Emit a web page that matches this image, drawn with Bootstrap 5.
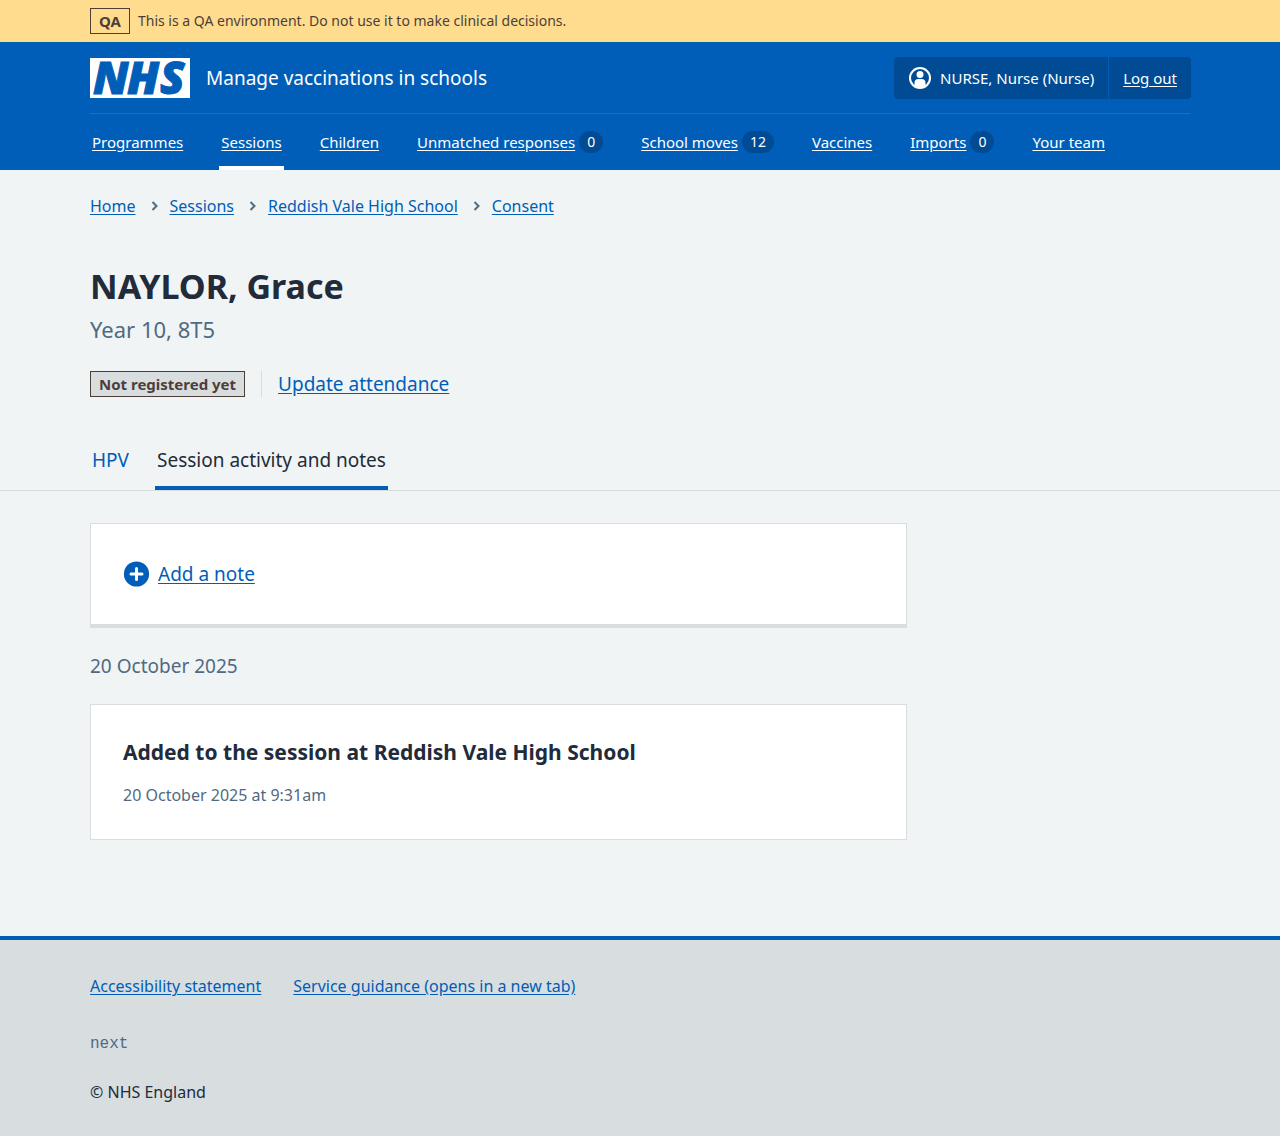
<!DOCTYPE html>
<html lang="en">
<head>
<meta charset="utf-8">
<meta name="viewport" content="width=device-width, initial-scale=1">
<title>NAYLOR, Grace – Manage vaccinations in schools</title>
<link href="https://cdn.jsdelivr.net/npm/bootstrap@5.3.0/dist/css/bootstrap.min.css" rel="stylesheet">
<style>
  :root { --blue: #005eb8; --blue-dark: #004b93; --ink: #212b3a; --muted: #4f6a82; --line: #d8dde0; --page: #f0f4f5; }
  body { font-family: "Noto Sans", "Open Sans", sans-serif; font-size: 16px; line-height: 24px; color: var(--ink); background: var(--page); }
  a { color: var(--blue); text-underline-offset: 2px; }
  .wrap { width: 100%; max-width: 1132px; margin: 0 auto; padding: 0 16px; }
  .env-banner { background: #ffdc8e; color: #4d3f38; font-size: 14px; }
  .status-tag { border: 1px solid #4d3f38; color: #4d3f38; font-size: 15px; font-weight: 700; line-height: 24px; padding: 0 8px; }
  .status-grey { background: var(--line); }
  .site-header { background: var(--blue); color: #fff; }
  .site-header a { color: #fff; }
  .header-top { padding: 15px 0 14px; border-bottom: 1px solid #1a6ebf; }
  .nhs-logo { overflow: visible; }
  .service { font-size: 19px; line-height: 28px; }
  .account { background: var(--blue-dark); border-radius: 4px; font-size: 15px; line-height: 42px; margin-right: -1px; }
  .account-user, .account-out { padding: 0 14px; }
  .account-out { border-left: 1px solid var(--blue); }
  .main-nav { font-size: 15px; column-gap: 34px; }
  .main-nav li { padding: 16px 2px; }
  .main-nav .current { box-shadow: inset 0 -4px #fff; }
  .count { background: var(--blue-dark); border-radius: 11px; font-size: 14px; line-height: 22px; padding: 0 8px; }
  .crumbs { column-gap: 11px; padding-top: 24px; }
  .person-name { font-size: 34px; font-weight: 700; line-height: 44px; margin: 46px 0 5px; }
  .person-group { font-size: 22px; line-height: 32px; color: var(--muted); margin: 0 0 26px; }
  .text-19 { font-size: 19px; line-height: 28px; }
  .attendance a { border-left: 1px solid var(--line); padding-left: 16px; line-height: 26px; }
  .tabs { border-bottom: 1px solid var(--line); margin-top: 33px; }
  .tabs ul { column-gap: 24px; }
  .tabs a { display: block; padding: 16px 2px; text-decoration: none; }
  .tabs .current { color: var(--ink); box-shadow: inset 0 -4px var(--blue); }
  .page-row { --bs-gutter-x: 32px; padding: 32px 0 96px; }
  .panel { background: #fff; border: 1px solid var(--line); padding: 32px; }
  .panel-action { display: flex; border-bottom-width: 4px; }
  .day { color: var(--muted); margin: 24px 0; }
  .event-title { font-size: 21px; font-weight: 700; line-height: 30px; margin: 0 0 16px; }
  .event-date { color: var(--muted); font-size: 16px; }
  .site-footer { background: var(--line); border-top: 4px solid var(--blue); padding: 34px 0 32px; }
  .footer-links { column-gap: 32px; }
  .release { font-family: "Liberation Mono", monospace; color: var(--muted); margin: 34px 0 24px; }
</style>
<script src="https://cdn.jsdelivr.net/npm/bootstrap@5.3.0/dist/js/bootstrap.bundle.min.js"></script>
</head>
<body>
<div class="env-banner">
  <div class="wrap d-flex align-items-center gap-2 py-2">
    <strong class="status-tag">QA</strong>
    <span>This is a QA environment. Do not use it to make clinical decisions.</span>
  </div>
</div>

<header class="site-header">
  <div class="wrap">
    <div class="header-top d-flex flex-wrap align-items-center justify-content-between gap-2">
      <div class="d-flex align-items-center gap-3">
        <a href="#" aria-label="NHS" class="d-flex">
          <svg class="nhs-logo" width="100" height="40" viewBox="0 0 100 40" aria-hidden="true">
            <rect width="100" height="40" fill="#fff"/>
            <g font-family="Open Sans" font-weight="800" font-style="italic" font-size="45" fill="#005eb8" stroke="#005eb8" stroke-width="1">
              <text x="3" y="36">N</text><text x="37" y="36">H</text><text x="70" y="36">S</text>
            </g>
          </svg>
        </a>
        <span class="service">Manage vaccinations in schools</span>
      </div>
      <div class="account d-flex">
        <span class="account-user d-flex align-items-center gap-2">
          <svg width="24" height="24" viewBox="0 0 24 24" aria-hidden="true">
            <circle cx="12" cy="12" r="10" fill="none" stroke="#fff" stroke-width="2"/>
            <circle cx="12" cy="8.500" r="3.500" fill="#fff"/>
            <path d="M6.500 19.500v-2.500a4 4 0 0 1 4-4h3a4 4 0 0 1 4 4v2.500A10 10 0 0 1 12 22a10 10 0 0 1-5.500-2.500z" fill="#fff"/>
          </svg>
          NURSE, Nurse (Nurse)
        </span>
        <span class="account-out"><a href="#">Log out</a></span>
      </div>
    </div>
    <nav aria-label="Primary">
      <ul class="main-nav list-unstyled d-flex flex-wrap mb-0">
        <li><a href="#">Programmes</a></li>
        <li class="current"><a href="#" aria-current="true">Sessions</a></li>
        <li><a href="#">Children</a></li>
        <li class="d-flex align-items-center gap-1"><a href="#">Unmatched responses</a><span class="count">0</span></li>
        <li class="d-flex align-items-center gap-1"><a href="#">School moves</a><span class="count">12</span></li>
        <li><a href="#">Vaccines</a></li>
        <li class="d-flex align-items-center gap-1"><a href="#">Imports</a><span class="count">0</span></li>
        <li><a href="#">Your team</a></li>
      </ul>
    </nav>
  </div>
</header>

<div class="wrap">
  <nav aria-label="Breadcrumb">
    <ol class="crumbs list-unstyled d-flex flex-wrap mb-0">
      <li><a href="#">Home</a></li>
      <li class="d-flex align-items-center"><svg width="12" height="12" viewBox="0 0 12 12" aria-hidden="true"><path d="M5.500 2l4 4-4 4" fill="none" stroke="#4f6a82" stroke-width="2"/></svg></li>
      <li><a href="#">Sessions</a></li>
      <li class="d-flex align-items-center"><svg width="12" height="12" viewBox="0 0 12 12" aria-hidden="true"><path d="M5.500 2l4 4-4 4" fill="none" stroke="#4f6a82" stroke-width="2"/></svg></li>
      <li><a href="#">Reddish Vale High School</a></li>
      <li class="d-flex align-items-center"><svg width="12" height="12" viewBox="0 0 12 12" aria-hidden="true"><path d="M5.500 2l4 4-4 4" fill="none" stroke="#4f6a82" stroke-width="2"/></svg></li>
      <li><a href="#">Consent</a></li>
    </ol>
  </nav>
  <h1 class="person-name">NAYLOR, Grace</h1>
  <p class="person-group">Year 10, 8T5</p>
  <div class="attendance d-flex flex-wrap align-items-center gap-3">
    <strong class="status-tag status-grey">Not registered yet</strong>
    <a href="#" class="text-19">Update attendance</a>
  </div>
</div>

<nav class="tabs" aria-label="Record">
  <ul class="wrap list-unstyled d-flex flex-wrap mb-0 text-19">
    <li><a href="#">HPV</a></li>
    <li><a href="#" class="current" aria-current="page">Session activity and notes</a></li>
  </ul>
</nav>

<main class="wrap">
  <div class="row page-row">
    <div class="col-lg-9">
      <div class="panel panel-action">
        <a href="#" class="d-flex align-items-center gap-2 text-19">
          <svg width="27" height="36" viewBox="0 0 27 36" aria-hidden="true">
            <circle cx="13.500" cy="18" r="12.600" fill="#005eb8"/>
            <path d="M13.500 12.500v11M8 18h11" stroke="#fff" stroke-width="3" stroke-linecap="round"/>
          </svg>
          <span>Add a note</span>
        </a>
      </div>
      <h2 class="day text-19 fw-normal">20 October 2025</h2>
      <div class="panel">
        <h3 class="event-title">Added to the session at Reddish Vale High School</h3>
        <p class="event-date mb-0">20 October 2025 at 9:31am</p>
      </div>
    </div>
  </div>
</main>

<footer class="site-footer">
  <div class="wrap">
    <ul class="footer-links list-unstyled d-flex flex-wrap mb-0">
      <li><a href="#">Accessibility statement</a></li>
      <li><a href="#">Service guidance (opens in a new tab)</a></li>
    </ul>
    <p class="release">next</p>
    <p class="mb-0">© NHS England</p>
  </div>
</footer>
</body>
</html>
